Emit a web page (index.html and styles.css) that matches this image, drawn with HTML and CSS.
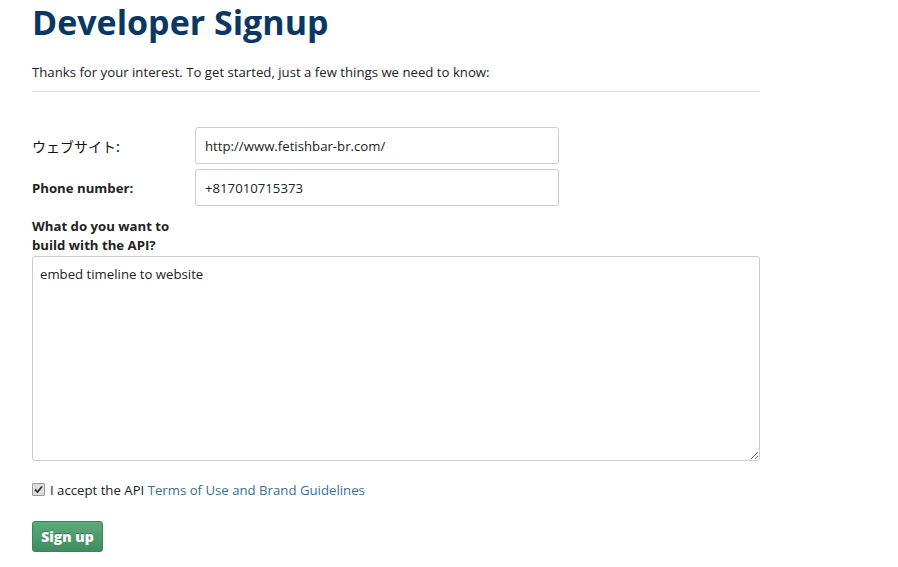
FILE: index.html
```html
<!DOCTYPE html>
<html>
<head>
<meta charset="utf-8">
<link rel="stylesheet" href="styles.css">
</head>
<body>
<div class="page">
  <h1 class="title">Developer Signup</h1>
  <p class="intro">Thanks for your interest. To get started, just a few things we need to know:</p>
  <hr class="rule">
  <form class="form">
    <div class="row">
      <label class="label label-normal">ウェブサイト:</label>
      <input class="input" type="text" value="http://www.fetishbar-br.com/">
    </div>
    <div class="row">
      <label class="label">Phone number:</label>
      <input class="input" type="text" value="+817010715373">
    </div>
    <div class="block">
      <label class="label label-wrap">What do you want to build with the API?</label>
      <textarea class="textarea">embed timeline to website</textarea>
    </div>
    <div class="check">
      <span class="checkbox"><svg width="9" height="9" viewBox="0 0 9 9"><path d="M1 4.5 L3.5 7 L8 1.5" fill="none" stroke="#333" stroke-width="1.8"/></svg></span>
      <span>I accept the API <a class="link" href="#">Terms of Use and Brand Guidelines</a></span>
    </div>
    <button type="button" class="btn">Sign up</button>
  </form>
</div>
</body>
</html>
```
FILE: styles.css
```css
html, body { margin: 0; padding: 0; background: #fff; }
body {
  font-family: "Open Sans", "Noto Sans", "Noto Sans CJK JP", sans-serif;
  font-size: 13.2px;
  color: #222;
}
.page {
  width: 728px;
  padding: 0 0 0 32px;
}
.title {
  margin: 0;
  font-size: 34px;
  line-height: 44px;
  font-weight: 700;
  color: #0b3862;
}
.intro {
  margin: 18px 0 0 0;
  line-height: 20px;
}
.rule {
  margin: 9px 0 0 0;
  border: 0;
  border-top: 1px solid #ddd;
  height: 0;
}
.form { margin-top: 35px; }
.row {
  display: flex;
  align-items: center;
  margin-bottom: 5px;
}
.label {
  width: 163px;
  flex: none;
  font-weight: 700;
  color: #222;
}
.label-normal { font-weight: 400; font-family: "Noto Sans CJK JP", sans-serif; font-size: 14px; color: #111; }
.input {
  width: 364px;
  height: 37px;
  box-sizing: border-box;
  border: 1px solid #ccc;
  border-radius: 3px;
  padding: 0 9px;
  font-family: inherit;
  font-size: 13.2px;
  color: #222;
}
.block { margin-top: 11px; }
.label-wrap {
  display: block;
  width: 150px;
  line-height: 19px;
}
.textarea {
  display: block;
  margin-top: 1px;
  width: 728px;
  height: 205px;
  box-sizing: border-box;
  border: 1px solid #ccc;
  border-radius: 3px;
  padding: 8px 7px;
  font-family: inherit;
  font-size: 13.2px;
  color: #222;
  resize: both;
}
.check {
  display: flex;
  align-items: center;
  margin-top: 20px;
  line-height: 18px;
}
.checkbox {
  display: flex;
  align-items: center;
  justify-content: center;
  width: 11px;
  height: 11px;
  margin: 0 5px 1px 0;
  border: 1px solid #9a9a9a;
  background: #dcdcdc;
  border-radius: 1px;
}
.link { color: #3a6d9a; text-decoration: none; }
.btn {
  display: block;
  margin-top: 22px;
  width: 71px;
  height: 31px;
  border: 1px solid #3a8458;
  border-radius: 3px;
  background: linear-gradient(#5daa7c, #3f8c5e);
  color: #fff;
  font-family: inherit;
  font-size: 14px;
  font-weight: 800;
  text-shadow: 0 -1px 0 rgba(0,0,0,0.25);
  padding: 0;
}
```
